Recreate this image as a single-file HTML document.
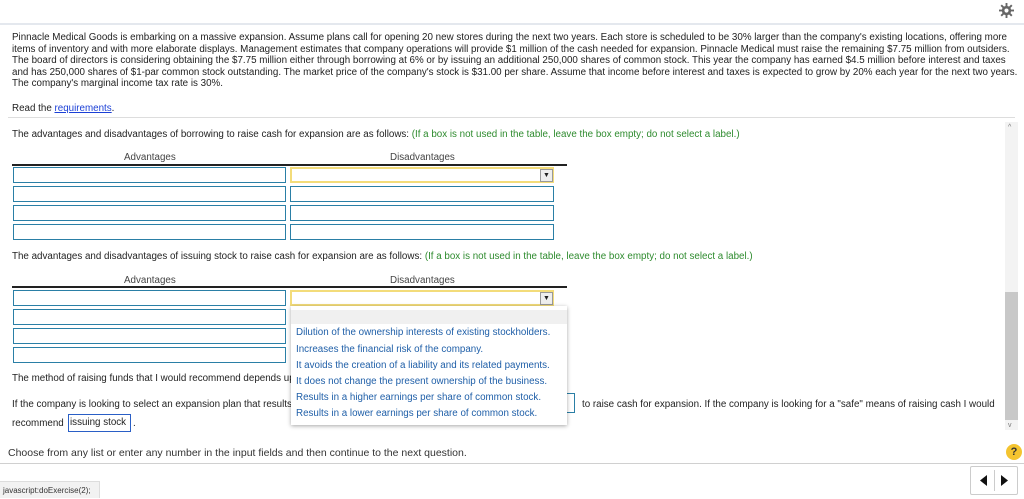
<!DOCTYPE html>
<html><head><style>
body{margin:0;width:1024px;height:498px;position:relative;background:#fff;font-family:"Liberation Sans",Arial,sans-serif;font-size:9.8px;color:#222;overflow:hidden}
.a{position:absolute;white-space:nowrap;line-height:11px}
.in{position:absolute;box-sizing:border-box;height:16px;border:1px solid #2a7fa6;background:#fff}
.g{color:#2e8b2e}
.dd{color:#1f5fa8}
</style></head><body>
<div class="a" style="left:0;top:23px;width:1024px;height:2px;background:#e4e8ee"></div>
<svg style="position:absolute;left:999px;top:3px" width="15" height="15" viewBox="0 0 16 16"><g fill="#666"><circle cx="8" cy="8" r="5"/><rect x="7" y="0" width="2" height="16"/><rect x="0" y="7" width="16" height="2"/><rect x="7" y="0" width="2" height="16" transform="rotate(45 8 8)"/><rect x="7" y="0" width="2" height="16" transform="rotate(-45 8 8)"/></g><circle cx="8" cy="8" r="2.2" fill="#fff"/></svg>
<div class="a" style="left:12px;top:32px;line-height:11.5px">Pinnacle Medical Goods is embarking on a massive expansion. Assume plans call for opening 20 new stores during the next two years. Each store is scheduled to be 30% larger than the company's existing locations, offering more<br>items of inventory and with more elaborate displays. Management estimates that company operations will provide $1 million of the cash needed for expansion. Pinnacle Medical must raise the remaining $7.75 million from outsiders.<br>The board of directors is considering obtaining the $7.75 million either through borrowing at 6% or by issuing an additional 250,000 shares of common stock. This year the company has earned $4.5 million before interest and taxes<br>and has 250,000 shares of $1-par common stock outstanding. The market price of the company's stock is $31.00 per share. Assume that income before interest and taxes is expected to grow by 20% each year for the next two years.<br>The company's marginal income tax rate is 30%.</div>
<div class="a" style="left:12px;top:103px">Read the <span style="color:#1a3fd6;text-decoration:underline">requirements</span>.</div>
<div class="a" style="left:8px;top:117px;width:1007px;height:1px;background:#ddd"></div>
<div class="a" style="left:1005px;top:122px;width:13px;height:308px;background:#f3f3f3"></div>
<div class="a" style="left:1005px;top:292px;width:13px;height:128px;background:#c8c8c8"></div>
<div class="a" style="left:1008px;top:122px;font-size:7px;color:#777">^</div>
<div class="a" style="left:1008px;top:420px;font-size:7px;color:#777">v</div>

<div class="a" style="left:12px;top:129px">The advantages and disadvantages of borrowing to raise cash for expansion are as follows: <span class="g">(If a box is not used in the table, leave the box empty; do not select a label.)</span></div>
<div class="a" style="left:124px;top:152px;color:#444">Advantages</div>
<div class="a" style="left:390px;top:152px;color:#444">Disadvantages</div>
<div class="a" style="left:12px;top:164px;width:555px;height:2px;background:#222"></div>
<div class="in" style="left:13px;top:167px;width:273px"></div>
<div class="in" style="left:290px;top:167px;width:264px;border:2px solid #f3dc7a"></div>
<div class="a" style="left:540px;top:169px;width:11px;height:11px;border:1px solid #999;background:#eee;font-size:7px;text-align:center;line-height:11px">▼</div>
<div class="in" style="left:13px;top:186px;width:273px"></div><div class="in" style="left:290px;top:186px;width:264px"></div>
<div class="in" style="left:13px;top:205px;width:273px"></div><div class="in" style="left:290px;top:205px;width:264px"></div>
<div class="in" style="left:13px;top:224px;width:273px"></div><div class="in" style="left:290px;top:224px;width:264px"></div>

<div class="a" style="left:12px;top:251px">The advantages and disadvantages of issuing stock to raise cash for expansion are as follows: <span class="g">(If a box is not used in the table, leave the box empty; do not select a label.)</span></div>
<div class="a" style="left:124px;top:275px;color:#444">Advantages</div>
<div class="a" style="left:390px;top:275px;color:#444">Disadvantages</div>
<div class="a" style="left:12px;top:286px;width:555px;height:2px;background:#222"></div>
<div class="in" style="left:13px;top:290px;width:273px"></div>
<div class="in" style="left:290px;top:290px;width:264px;border:2px solid #f3dc7a"></div>
<div class="a" style="left:540px;top:292px;width:11px;height:11px;border:1px solid #999;background:#eee;font-size:7px;text-align:center;line-height:11px">▼</div>
<div class="in" style="left:13px;top:309px;width:273px"></div>
<div class="in" style="left:13px;top:328px;width:273px"></div>
<div class="in" style="left:13px;top:347px;width:273px"></div>

<div class="a" style="left:12px;top:373px">The method of raising funds that I would recommend depends up</div>
<div class="a" style="left:12px;top:399px">If the company is looking to select an expansion plan that results</div>
<div class="a" style="left:560px;top:393px;width:15px;height:20px;border:1px solid #2a7fa6;border-left:none;box-sizing:border-box"></div>
<div class="a" style="left:582px;top:399px">to raise cash for expansion. If the company is looking for a "safe" means of raising cash I would</div>
<div class="a" style="left:12px;top:418px">recommend</div>
<div class="a" style="left:68px;top:414px;width:63px;height:18px;border:1px solid #2a5fc6;box-sizing:border-box;padding:3px 1px;line-height:10px;overflow:hidden">issuing stock</div>
<div class="a" style="left:133px;top:418px">.</div>

<div class="a" style="left:291px;top:306px;width:276px;height:119px;background:#fff;box-shadow:0 1px 4px rgba(0,0,0,.35)">
<div style="position:absolute;left:0;top:4px;width:276px;height:14px;background:#f0f0f0"></div>
<div class="a dd" style="left:5px;top:21px">Dilution of the ownership interests of existing stockholders.</div>
<div class="a dd" style="left:5px;top:38px">Increases the financial risk of the company.</div>
<div class="a dd" style="left:5px;top:54px">It avoids the creation of a liability and its related payments.</div>
<div class="a dd" style="left:5px;top:70px">It does not change the present ownership of the business.</div>
<div class="a dd" style="left:5px;top:86px">Results in a higher earnings per share of common stock.</div>
<div class="a dd" style="left:5px;top:102px">Results in a lower earnings per share of common stock.</div>
</div>

<div class="a" style="left:8px;top:448px;font-size:10.5px;color:#333">Choose from any list or enter any number in the input fields and then continue to the next question.</div>
<div class="a" style="left:1006px;top:444px;width:16px;height:16px;border-radius:50%;background:#f4c430;color:#333;font-weight:bold;font-size:11px;text-align:center;line-height:16px">?</div>
<div class="a" style="left:0;top:463px;width:1024px;height:1px;background:#d0d0d0"></div>
<div class="a" style="left:0;top:481px;width:100px;height:17px;background:#f2f2f2;border-top:1px solid #ddd;border-right:1px solid #ddd;font-size:8px;color:#333;line-height:17px;padding-left:3px;box-sizing:border-box">javascript:doExercise(2);</div>
<div class="a" style="left:970px;top:466px;width:48px;height:29px;border:1px solid #ccc;border-radius:2px;background:#fff;box-sizing:border-box"></div>
<div class="a" style="left:994px;top:470px;width:1px;height:21px;background:#ccc"></div>
<svg style="position:absolute;left:980px;top:475px" width="8" height="11"><polygon points="7,0 7,11 0,5.5" fill="#111"/></svg>
<svg style="position:absolute;left:1001px;top:475px" width="8" height="11"><polygon points="0,0 0,11 7,5.5" fill="#111"/></svg>
</body></html>
